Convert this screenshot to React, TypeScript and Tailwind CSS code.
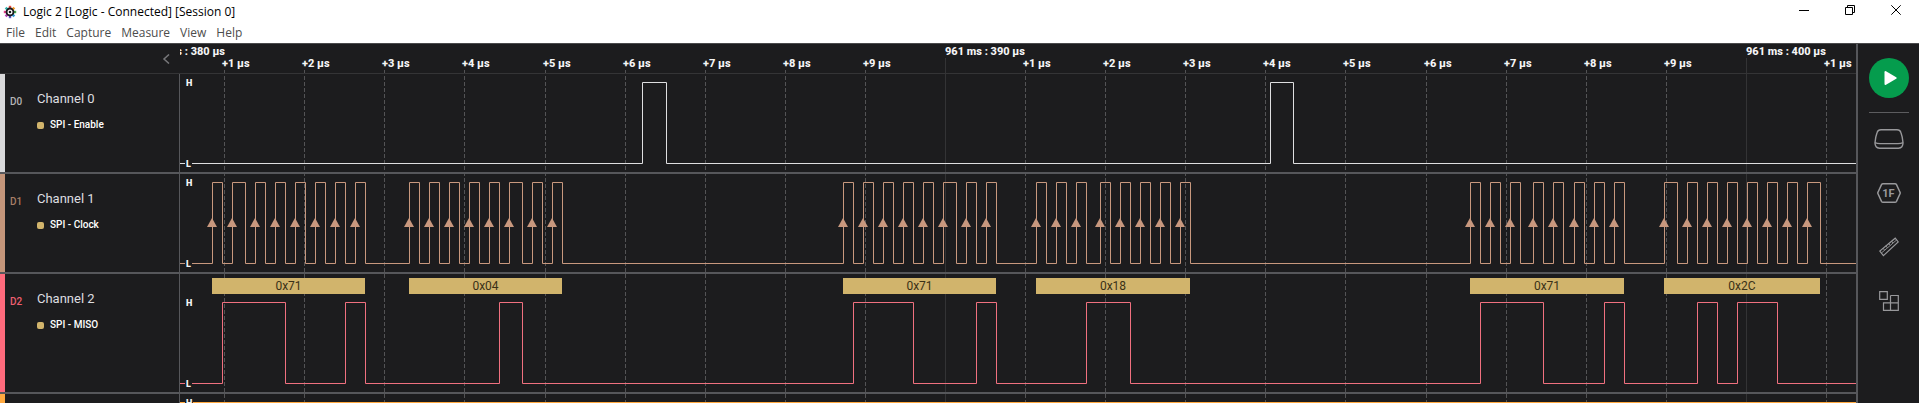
import React from "react";

type Group = { value: string; edges: number[]; data: number[] };

const GROUPS: Group[] = [
  {
    value: "0x71",
    edges: [32, 42, 52, 65, 75, 85, 95, 105, 115, 125, 135, 145, 155, 165, 175, 185],
    data: [42, 105, 165, 185],
  },
  {
    value: "0x04",
    edges: [229, 239, 249, 259, 269, 279, 289, 299, 309, 319, 329, 342, 352, 362, 372, 382],
    data: [319, 342],
  },
  {
    value: "0x71",
    edges: [663, 673, 683, 693, 703, 713, 723, 733, 743, 753, 763, 776, 786, 796, 806, 816],
    data: [673, 733, 796, 816],
  },
  {
    value: "0x18",
    edges: [856, 866, 876, 886, 896, 906, 920, 930, 940, 950, 960, 970, 980, 990, 1000, 1010],
    data: [906, 950],
  },
  {
    value: "0x71",
    edges: [1290, 1300, 1310, 1320, 1330, 1340, 1353, 1363, 1373, 1383, 1394, 1404, 1414, 1424, 1434, 1444],
    data: [1300, 1363, 1424, 1444],
  },
  {
    value: "0x2C",
    edges: [1484, 1497, 1507, 1517, 1527, 1537, 1547, 1557, 1567, 1577, 1587, 1597, 1607, 1617, 1627, 1640],
    data: [1517, 1537, 1557, 1597],
  },
];

const ENABLE_EDGES = [462, 486, 1090, 1113];
const CLOCK_EDGES = GROUPS.flatMap((g) => g.edges);
const MISO_EDGES = GROUPS.flatMap((g) => g.data);
const RISES = CLOCK_EDGES.filter((_, i) => i % 2 === 0);

const TICKS = Array.from({ length: 21 }, (_, i) => {
  const step = (i + 1) % 10;
  const major = step === 0;
  return {
    x: Math.floor(44.6 + i * 80.1),
    major,
    label: major ? `961 ms : ${380 + i + 1} µs` : `+${step} µs`,
  };
});

function wavePath(edges: number[], high: number, low: number) {
  let d = `M0 ${low + 0.5}`;
  edges.forEach((x, i) => {
    d += `H${x + 0.5}V${(i % 2 === 0 ? high : low) + 0.5}`;
  });
  return d + "H6000";
}

function Level({ children, className }: { children: string; className: string }) {
  return (
    <span className={`absolute left-[5px] bg-[#1c1c1e] px-px text-[9px] leading-[10px] font-black text-[#f4f4f5] ${className}`}>
      {children}
    </span>
  );
}

function Wave({ edges, high, low, color, arrows }: { edges: number[]; high: number; low: number; color: string; arrows?: number[] }) {
  return (
    <svg className="absolute inset-0 h-full w-full" aria-hidden="true">
      <path d={wavePath(edges, high, low)} fill="none" stroke={color} />
      {arrows?.map((x) => (
        <path key={x} d={`M${x} 44L${x + 5} 53H${x - 5}Z`} fill={color} />
      ))}
    </svg>
  );
}

function ChannelLabel({ id, name, role, strip, text, size }: { id: string; name: string; role: string; strip: string; text: string; size: string }) {
  return (
    <div className={`flex border-b-2 border-[#56575b] ${size}`}>
      <div className={`w-[5px] ${strip}`} />
      <div className={`w-8 pt-[21px] pl-[5px] text-[10px] leading-[14px] font-medium ${text}`}>{id}</div>
      <div className="pt-4">
        <h2 className="text-[13px] leading-[18px] text-[#dedee0]">{name}</h2>
        <p className="mt-[9px] flex items-center gap-[6px] text-[10px] leading-4 font-medium text-white">
          <span className="size-[7px] rounded-[2px] bg-[#d1b46c]" />
          {role}
        </p>
      </div>
    </div>
  );
}

function Logo() {
  const teeth = ["#e8483f", "#f19a2b", "#4aa84e", "#2f9bd8", "#5c55c8", "#b03fb5", "#e5418a", "#34b7b0"];
  return (
    <svg viewBox="0 0 14 14" className="size-[14px]" aria-hidden="true">
      {teeth.map((c, i) => (
        <rect key={c} x="5.8" y="0.8" width="2.4" height="4" fill={c} transform={`rotate(${i * 45} 7 7)`} />
      ))}
      <circle cx="7" cy="7" r="4.4" fill="#1b1b1f" />
      <circle cx="7" cy="7" r="1.9" fill="none" stroke="#fff" strokeWidth="1.2" />
    </svg>
  );
}

const iconProps = { fill: "none", stroke: "#98989b", strokeWidth: 1.2, "aria-hidden": true } as const;

export default function App() {
  return (
    <div className="flex h-screen flex-col overflow-hidden bg-[#1c1c1e] font-['Roboto',sans-serif]">
      <header className="bg-white font-['Open_Sans','Noto_Sans',sans-serif]">
        <div className="flex h-[22px] items-start justify-between">
          <div className="flex h-6 items-center gap-[6px] pl-[3px]">
            <Logo />
            <h1 className="text-[12px] leading-4 text-black">Logic 2 [Logic - Connected] [Session 0]</h1>
          </div>
          <div className="flex">
            <button aria-label="Minimize" className="flex h-5 w-[46px] items-center justify-center">
              <svg width="10" height="10" stroke="#000" fill="none"><path d="M0 5.5H10" /></svg>
            </button>
            <button aria-label="Restore" className="flex h-5 w-[46px] items-center justify-center">
              <svg width="10" height="10" stroke="#000" fill="none"><path d="M.5 2.5H7.5V9.5H.5ZM2.5 2.5V.5H9.5V7.5H7.5" /></svg>
            </button>
            <button aria-label="Close" className="flex h-5 w-[46px] items-center justify-center">
              <svg width="10" height="10" stroke="#000" fill="none"><path d="M.3 .3L9.7 9.7M9.7 .3L.3 9.7" /></svg>
            </button>
          </div>
        </div>
        <nav className="flex h-[21px] items-center gap-[10px] pl-[6px] text-[12px] leading-4 text-[#4c4c4c]">
          {["File", "Edit", "Capture", "Measure", "View", "Help"].map((m) => (
            <button key={m}>{m}</button>
          ))}
        </nav>
      </header>

      <main className="flex min-h-0 flex-1 border-t border-[#4a4a4c]">
        <section aria-label="Channels" className="w-[180px] shrink-0">
          <div className="flex h-[30px] items-center justify-end border-b border-[#343436] pr-2">
            <button aria-label="Collapse channels">
              <svg width="10" height="10" fill="none" stroke="#77777a" strokeWidth="1.5"><path d="M7 .5L2 5L7 9.5" /></svg>
            </button>
          </div>
          <div className="border-r border-[#56575b]">
            <ChannelLabel id="D0" name="Channel 0" role="SPI - Enable" strip="bg-[#d9d9db]" text="text-[#b4b4b6]" size="h-[100px]" />
            <ChannelLabel id="D1" name="Channel 1" role="SPI - Clock" strip="bg-[#c4957a]" text="text-[#a87e67]" size="h-[100px]" />
            <ChannelLabel id="D2" name="Channel 2" role="SPI - MISO" strip="bg-[#ff6b7d]" text="text-[#ee5f70]" size="h-[120px]" />
            <div className="h-[100px]">
              <div className="h-full w-[5px] bg-[#ffa940]" />
            </div>
          </div>
        </section>

        <section aria-label="Capture" className="relative min-w-0 flex-1 overflow-hidden">
          <svg className="absolute inset-0 h-full w-full" aria-hidden="true">
            {TICKS.map((t) =>
              t.major ? (
                <path key={t.x} d={`M${t.x + 0.5} 14V2000`} stroke="#333335" />
              ) : (
                <path key={t.x} d={`M${t.x + 0.5} 26V2000`} stroke="#535355" strokeDasharray="4 2" />
              ),
            )}
          </svg>

          <div className="relative h-[30px] border-b border-[#343436] text-[11px] leading-3 font-extrabold whitespace-nowrap text-[#f4f4f5]">
            <span className="absolute top-[2px] right-full translate-x-[45px]">961 ms : 380 µs</span>
            {TICKS.map((t) => (
              <span key={t.x} className={`absolute ${t.major ? "top-[2px]" : "top-[14px]"}`} style={{ left: t.major ? t.x : t.x - 2 }}>
                {t.label}
              </span>
            ))}
          </div>

          <div className="relative h-[100px] border-b-2 border-[#56575b]">
            <Wave edges={ENABLE_EDGES} high={8} low={89} color="#dedee0" />
            <Level className="top-1">H</Level>
            <Level className="top-[85px]">L</Level>
          </div>
          <div className="relative h-[100px] border-b-2 border-[#56575b]">
            <Wave edges={CLOCK_EDGES} high={8} low={89} color="#c8987e" arrows={RISES} />
            <Level className="top-1">H</Level>
            <Level className="top-[85px]">L</Level>
          </div>
          <div className="relative h-[120px] border-b-2 border-[#56575b]">
            <Wave edges={MISO_EDGES} high={28} low={109} color="#f0707f" />
            {GROUPS.map((g) => (
              <div
                key={g.edges[0]}
                className="absolute top-1 h-4 bg-[#d1b46c] text-center text-[12px] leading-4 text-[#3a3117]"
                style={{ left: g.edges[0], width: g.edges[15] - g.edges[0] }}
              >
                {g.value}
              </div>
            ))}
            <Level className="top-6">H</Level>
            <Level className="top-[105px]">L</Level>
          </div>
          <div className="relative h-[100px]">
            <Wave edges={[]} high={8} low={8} color="#ffa940" />
            <Level className="top-1">H</Level>
          </div>
        </section>

        <aside aria-label="Tools" className="flex w-[63px] shrink-0 flex-col items-center border-l-2 border-[#56575b] pt-[14px]">
          <button aria-label="Start capture" className="flex size-10 shrink-0 items-center justify-center rounded-full bg-[#059c4d]">
            <svg width="40" height="40" fill="#fff"><path d="M15.5 14.2Q15.5 12.4 17 13.2L27.2 19.2Q28.4 20 27.2 20.8L17 26.8Q15.5 27.6 15.5 25.8Z" /></svg>
          </button>
          <div className="mt-[14px] h-px w-10 shrink-0 bg-[#5c5c5f]" />
          <div className="mt-[11px] flex flex-col items-center gap-6">
            <button aria-label="Device" className="flex h-[30px] items-center justify-center">
              <svg width="30" height="20" viewBox="0 0 30 20" {...iconProps}>
                <path d="M7 .8H23Q26 .8 26.9 3.5Q28.6 8 29 13.8Q29 19 24.5 19.2H5.5Q1 19 1 13.8Q1.4 8 3.1 3.5Q4 .8 7 .8Z" strokeWidth="1.4" />
                <path d="M1 13.6Q3 14.6 6 14.6H24Q27 14.6 29 13.6" />
              </svg>
            </button>
            <button aria-label="Analyzers" className="relative flex h-[30px] items-center justify-center text-[11px] leading-none font-bold text-[#98989b]">
              <svg width="24" height="20" viewBox="0 0 24 20" {...iconProps}>
                <path d="M6 .8H18Q19 .8 19.5 1.7L23 9.2Q23.4 10 23 10.8L19.5 18.3Q19 19.2 18 19.2H6Q5 19.2 4.5 18.3L1 10.8Q.6 10 1 9.2L4.5 1.7Q5 .8 6 .8Z" strokeWidth="1.5" />
              </svg>
              <span className="absolute">1F</span>
            </button>
            <button aria-label="Measurements" className="flex h-[30px] items-center justify-center">
              <svg width="20" height="20" viewBox="0 0 20 20" {...iconProps}>
                <path d="M16.2 1.2L19.2 5L4.4 18.6L.8 14Z" />
                <path d="M2.4 16L17.6 3M4 11.2L5.6 13.2M6.8 8.8L8.4 10.8M9.6 6.6L11.2 8.4M12.6 4.2L14 6" strokeWidth="0.9" />
              </svg>
            </button>
            <button aria-label="Extensions" className="flex h-[30px] items-center justify-center">
              <svg width="20" height="20" viewBox="0 0 20 20" {...iconProps}>
                <path d="M.7 .7H8.3V8.3H.7ZM11.5 4.5H19.3V19.3H4.5V11.8H19.3M11.5 4.5V19.3" />
              </svg>
            </button>
          </div>
        </aside>
      </main>
    </div>
  );
}
